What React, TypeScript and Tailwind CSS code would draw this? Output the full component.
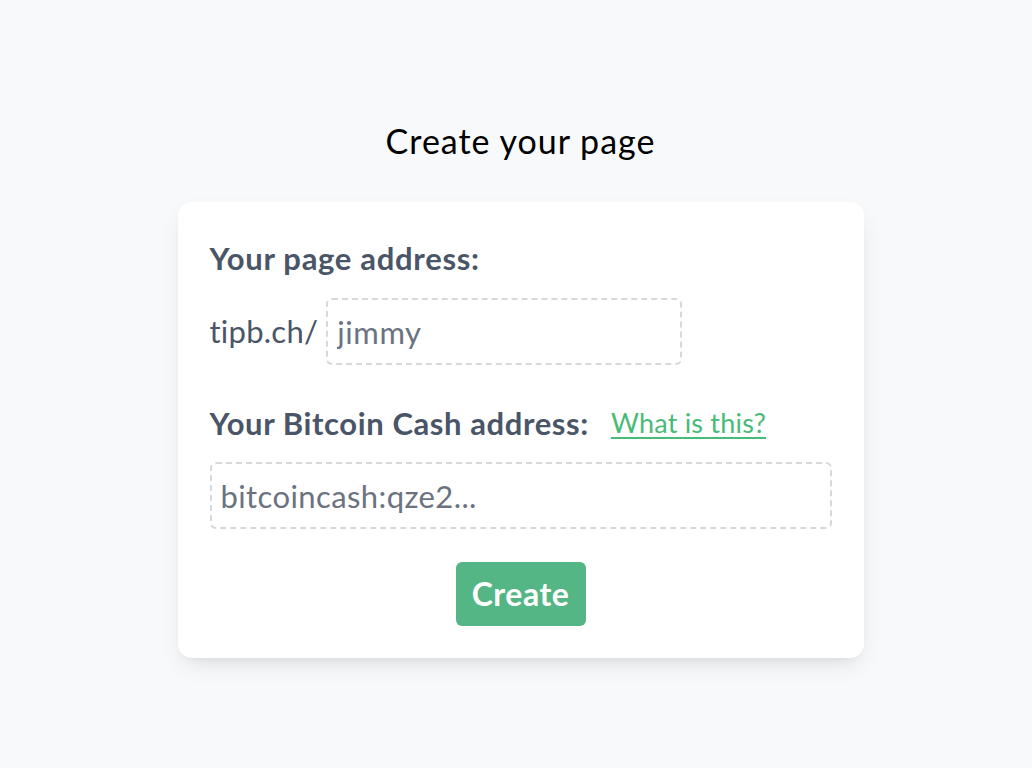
export default function App() {
  return (
    <div className="min-h-screen bg-[#f8f9fb] font-['Lato',sans-serif] pl-[9px]">
      <div className="flex flex-col items-center pt-[117px]">
        <h1 className="text-[34px] leading-[48px] tracking-[1px] text-black">Create your page</h1>

        <form className="mt-[37px] w-[686px] rounded-[14px] bg-white px-8 pt-[32px] pb-8 shadow-[0_10px_25px_-5px_rgba(0,0,0,0.1),0_6px_10px_-6px_rgba(0,0,0,0.08)]">
          <label className="block text-[31px] leading-[48px] tracking-[0.7px] font-bold text-[#4a5568]">
            Your page address:
          </label>

          <div className="mt-[16px] flex items-center">
            <span className="text-[31px] tracking-[0.25px] text-[#4a5568]">tipb.ch/</span>
            <input
              className="ml-[8px] h-[67px] w-[356px] rounded-md border-2 border-dashed border-[#d6d8dc] px-[9px] text-[31px] tracking-[0.6px] text-[#6b7280] outline-none"
              defaultValue="jimmy"
            />
          </div>

          <div className="mt-[34px] flex items-center">
            <label className="text-[31px] leading-[48px] tracking-[0.6px] font-bold text-[#4a5568]">
              Your Bitcoin Cash address:
            </label>
            <a
              href="#"
              className="ml-[22px] text-[27px] leading-[48px] tracking-[0.2px] text-[#48bb78] underline decoration-2 underline-offset-4"
            >
              What is this?
            </a>
          </div>

          <input
            className="mt-[15px] block h-[67px] w-full rounded-md border-2 border-dashed border-[#d6d8dc] px-[9px] text-[31px] tracking-[0.4px] text-[#6b7280] outline-none"
            defaultValue="bitcoincash:qze2..."
          />

          <div className="mt-[33px] flex justify-center">
            <button
              type="button"
              className="h-[64px] w-[130px] rounded-md bg-[#55b685] text-[32px] tracking-[0.5px] font-bold text-white"
            >
              Create
            </button>
          </div>
        </form>
      </div>
    </div>
  );
}
